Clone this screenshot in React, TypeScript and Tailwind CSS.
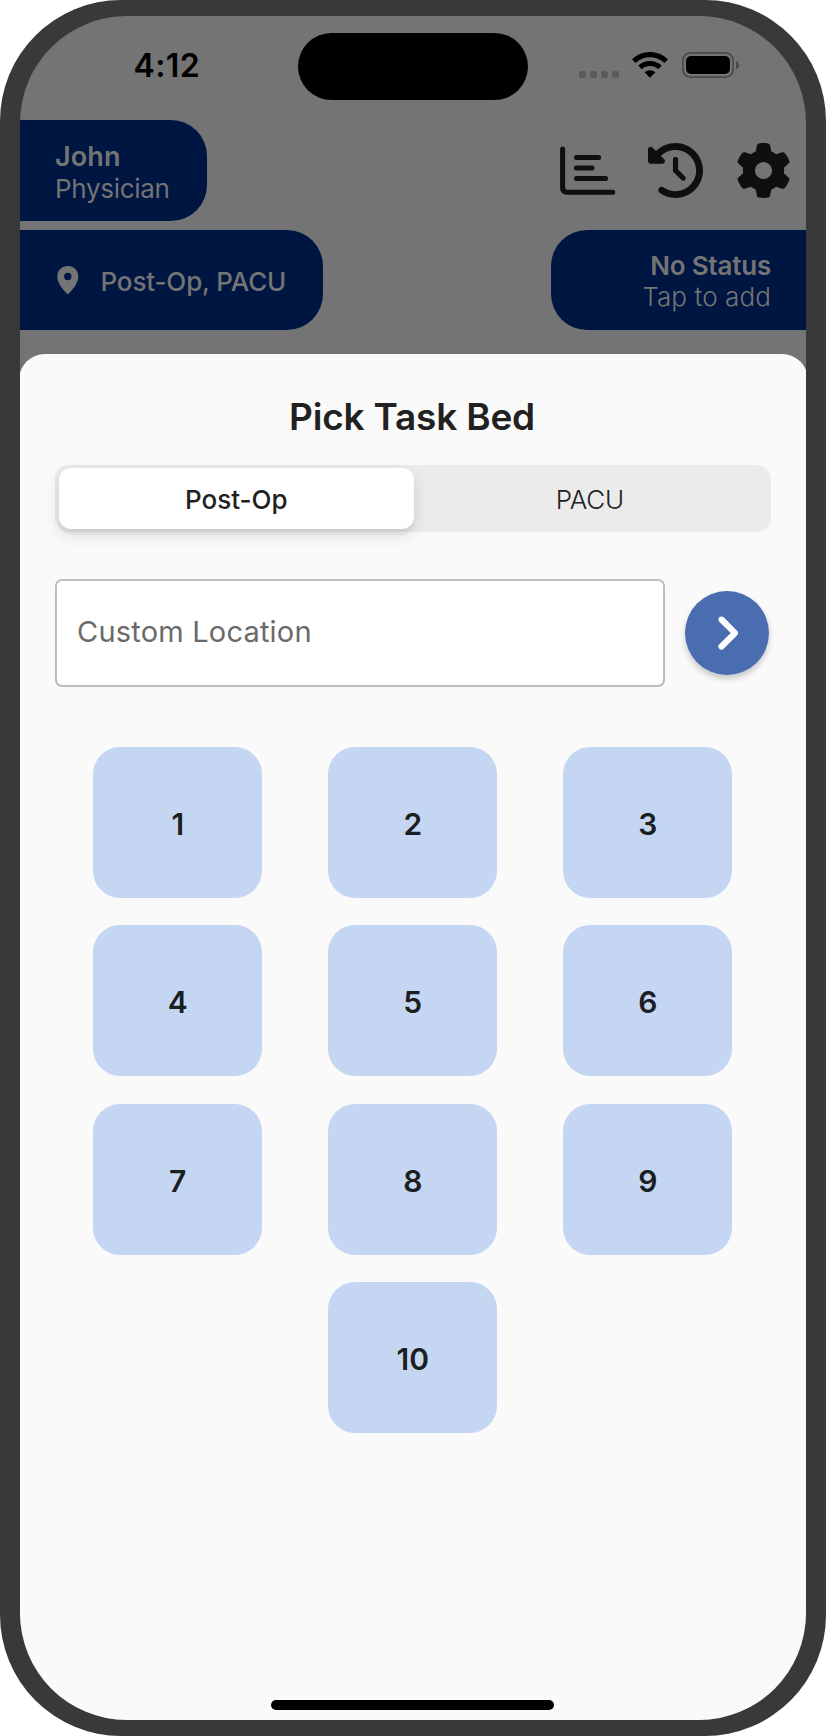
import { FaChevronRight, FaClockRotateLeft, FaGear } from "react-icons/fa6";

const beds = ["1", "2", "3", "4", "5", "6", "7", "8", "9", "10"];

function WifiIcon() {
  return (
    <svg width="36" height="26" viewBox="0 0 36 26" fill="none" stroke="#000" className="ml-[13px] mt-[3.5px] shrink-0">
      <path d="M1.8 9.2C10.8 0.4 25.2 0.4 34.2 9.2" strokeWidth="5.2" />
      <path d="M8 15.4C13.6 10.2 22.4 10.2 28 15.4" strokeWidth="5" />
      <path d="M12.6 20.3C15.6 17.5 20.4 17.5 23.4 20.3L18 25.7Z" fill="#000" stroke="none" />
    </svg>
  );
}

function BatteryIcon() {
  return (
    <svg width="58" height="26" viewBox="0 0 58 26" fill="none" className="ml-[14px] mt-[3.5px] shrink-0">
      <rect x="0.9" y="0.9" width="50.2" height="24.2" rx="7.6" stroke="#4a4a4a" strokeWidth="1.8" />
      <rect x="4" y="4" width="44" height="18" rx="5" fill="#000" />
      <path d="M54 9.2C58 10.2 58 16.2 54 17.2Z" fill="#4a4a4a" />
    </svg>
  );
}

function ChartIcon() {
  return (
    <svg width="56" height="50" viewBox="0 0 56 50" fill="none" stroke="#0f0f0f" strokeWidth="5" strokeLinecap="round" className="shrink-0">
      <path d="M2.6 2.9V41.5Q2.6 46.2 7.3 46.2H52.7" />
      <path d="M16.4 11.6H38.6M16.4 22.1H32M16.4 32.5H45.6" />
    </svg>
  );
}

function PinIcon() {
  return (
    <svg width="22" height="28" viewBox="0 0 22 28" className="shrink-0">
      <path
        fill="#747474"
        fillRule="evenodd"
        d="M10.8 0C4.9 0 0.3 4.6 0.3 10.4C0.3 15.8 4.4 22 9.5 27.3Q10.8 28.5 12.1 27.3C17.2 22 21.3 15.8 21.3 10.4C21.3 4.6 16.7 0 10.8 0ZM10.8 6.8A3.7 3.7 0 1 1 10.8 14.2A3.7 3.7 0 0 1 10.8 6.8Z"
      />
    </svg>
  );
}

function StatusBar() {
  return (
    <div className="flex h-[104px] items-start pl-[113.5px] pt-[16.5px]">
      <div className="mt-[14px] w-[164px] text-[32px] font-semibold leading-[38px] tracking-[0.4px] text-black">4:12</div>
      <div className="h-[67.5px] w-[230.5px] shrink-0 rounded-full bg-black" />
      <div className="ml-[51px] mt-[15.5px] flex">
        <div className="mt-[22.5px] flex gap-[4px]">
          {[0, 1, 2, 3].map((dot) => (
            <span key={dot} className="h-[7px] w-[7px] rounded-[2px] bg-[#5b5b5b]" />
          ))}
        </div>
        <WifiIcon />
        <BatteryIcon />
      </div>
    </div>
  );
}

function Header() {
  return (
    <div className="text-[26px] text-[#747474]">
      <div className="flex h-[101px] items-start justify-between">
        <div className="h-[101px] w-[187.3px] rounded-r-[36px] bg-[#001642] pl-[35px] pt-[21px]">
          <div className="text-[27px] font-semibold leading-[32px] tracking-[0.1px]">John</div>
          <div className="leading-[32px] tracking-[-0.3px]">Physician</div>
        </div>
        <div className="mr-[15.5px] mt-[23px] flex items-start text-[#0f0f0f]">
          <div className="mt-[3px] flex">
            <ChartIcon />
          </div>
          <FaClockRotateLeft size={55} className="ml-[32px]" />
          <FaGear size={55} className="ml-[33px]" />
        </div>
      </div>
      <div className="mt-[9px] flex h-[100px] justify-between">
        <div className="flex w-[303px] items-center rounded-r-[36px] bg-[#001642] pl-[37px] font-medium">
          <PinIcon />
          <span className="ml-[21.5px] mt-[3px] whitespace-nowrap tracking-[-0.15px]">Post-Op, PACU</span>
        </div>
        <div className="w-[255.3px] rounded-l-[36px] bg-[#001642] pr-[35px] pt-[20px] text-right leading-[31px]">
          <div className="font-semibold tracking-[-0.2px]">No Status</div>
          <div className="font-light tracking-[0.1px]">Tap to add</div>
        </div>
      </div>
    </div>
  );
}

function BedSheet() {
  return (
    <div className="-mx-[1.5px] mt-[24px] flex flex-1 flex-col rounded-t-[26px] bg-[#fafafa] px-[36.5px] text-[#212121]">
      <h1 className="mt-[40px] pr-[2px] text-center text-[37px] font-semibold leading-[46px] tracking-[-0.2px]">Pick Task Bed</h1>
      <div className="mt-[24.5px] flex h-[67.5px] rounded-[14px] bg-[#ebebeb] p-[3.5px] text-[26px]">
        <button className="h-[60.5px] w-[355.5px] rounded-[12px] bg-white pt-[3px] font-[450] shadow-[0_6px_16px_rgba(0,0,0,0.12),0_6px_2px_rgba(0,0,0,0.04)]">
          Post-Op
        </button>
        <button className="h-[60.5px] flex-1 pr-[2px] pt-[3px] font-light tracking-[-0.3px]">PACU</button>
      </div>
      <div className="mt-[46.5px] flex items-center">
        <input
          aria-label="Custom Location"
          placeholder="Custom Location"
          className="h-[108.5px] w-[610px] rounded-[7px] border-2 border-[#bdbdbd] bg-white px-[20px] pb-[3px] text-[29px] tracking-[0.2px] text-[#212121] placeholder:text-[#6a6a6a]"
        />
        <button
          aria-label="Confirm location"
          className="ml-[20px] flex h-[84px] w-[84px] items-center justify-center rounded-full bg-[#4a6db1] pr-[2px] text-white shadow-[0_4px_6px_rgba(0,0,0,0.2)]"
        >
          <FaChevronRight size={36} stroke="currentColor" strokeWidth={24} />
        </button>
      </div>
      <div className="mt-[60px] flex flex-wrap justify-center gap-x-[65.75px] gap-y-[27.3px] pr-[0.5px]">
        {beds.map((bed) => (
          <button key={bed} className="h-[151px] w-[169.25px] rounded-[27px] bg-[#c5d6f2] pt-[4px] text-[30px] font-semibold text-[#1c1f22]">
            {bed}
          </button>
        ))}
      </div>
      <div className="mb-[10.5px] mr-[1px] mt-auto h-[9.5px] w-[283px] self-center rounded-full bg-black" />
    </div>
  );
}

export default function App() {
  return (
    <div className="h-[1736px] w-[826px] bg-white font-['Inter',sans-serif]">
      <div className="h-full w-full rounded-[121px] bg-[#393939] px-[20px] py-[16px]">
        <div className="flex h-full flex-col overflow-hidden rounded-[107px] bg-[#747474]">
          <StatusBar />
          <Header />
          <BedSheet />
        </div>
      </div>
    </div>
  );
}
